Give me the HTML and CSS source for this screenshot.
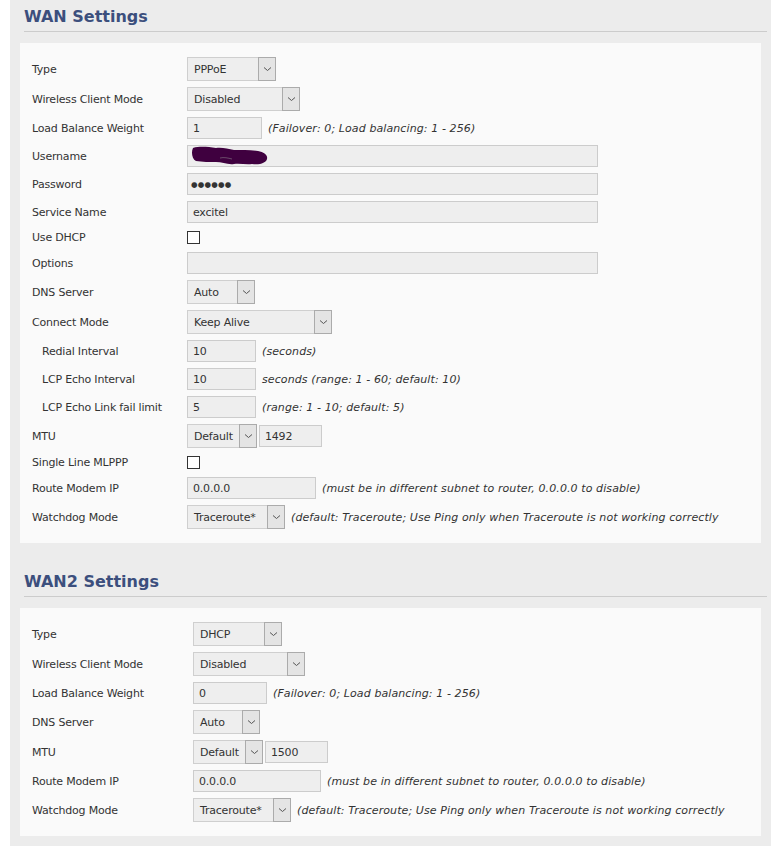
FILE: index.html
```html
<!DOCTYPE html>
<html>
<head>
<meta charset="utf-8">
<title>WAN Settings</title>
<link rel="stylesheet" href="styles.css">
</head>
<body>
<div class="panel">
  <h2 class="heading">WAN Settings</h2>
  <div class="card card-1">
    <div class="row"><span class="label">Type</span><span class="select w89"><span class="val">PPPoE</span><span class="arrow"><svg width="9" height="6" viewBox="0 0 9 6"><path d="M1 1.5 L4.5 4.5 L8 1.5" fill="none" stroke="#555" stroke-width="1"/></svg></span></span></div>
    <div class="row"><span class="label">Wireless Client Mode</span><span class="select w113"><span class="val">Disabled</span><span class="arrow"><svg width="9" height="6" viewBox="0 0 9 6"><path d="M1 1.5 L4.5 4.5 L8 1.5" fill="none" stroke="#555" stroke-width="1"/></svg></span></span></div>
    <div class="row"><span class="label">Load Balance Weight</span><span class="input w75">1</span><span class="help">(Failover: 0; Load balancing: 1 - 256)</span></div>
    <div class="row"><span class="label">Username</span><span class="input wide"><svg class="scribble" width="80" height="20" viewBox="0 0 80 20"><path d="M3 2 C10 0 18 1 26 2 C32 1 38 3 44 4 C52 4 60 4 68 5 C74 6 78 9 77 13 C76 17 70 19 62 18 C56 19 50 17 44 18 C38 19 32 16 26 16 C20 16 12 16 6 15 C2 13 1 6 3 2 Z" fill="#3f003f"/><path d="M30 12 C34 11 38 12 42 13" fill="none" stroke="#6a4a6a" stroke-width="1"/></svg></span></div>
    <div class="row"><span class="label">Password</span><span class="input wide dots">●●●●●●</span></div>
    <div class="row"><span class="label">Service Name</span><span class="input wide">excitel</span></div>
    <div class="row"><span class="label">Use DHCP</span><span class="check"></span></div>
    <div class="row"><span class="label">Options</span><span class="input wide"></span></div>
    <div class="row"><span class="label">DNS Server</span><span class="select w68"><span class="val">Auto</span><span class="arrow"><svg width="9" height="6" viewBox="0 0 9 6"><path d="M1 1.5 L4.5 4.5 L8 1.5" fill="none" stroke="#555" stroke-width="1"/></svg></span></span></div>
    <div class="row"><span class="label">Connect Mode</span><span class="select w145"><span class="val">Keep Alive</span><span class="arrow"><svg width="9" height="6" viewBox="0 0 9 6"><path d="M1 1.5 L4.5 4.5 L8 1.5" fill="none" stroke="#555" stroke-width="1"/></svg></span></span></div>
    <div class="row"><span class="label sub">Redial Interval</span><span class="input w69">10</span><span class="help">(seconds)</span></div>
    <div class="row"><span class="label sub">LCP Echo Interval</span><span class="input w69">10</span><span class="help">seconds (range: 1 - 60; default: 10)</span></div>
    <div class="row"><span class="label sub">LCP Echo Link fail limit</span><span class="input w69">5</span><span class="help">(range: 1 - 10; default: 5)</span></div>
    <div class="row"><span class="label">MTU</span><span class="select w70"><span class="val">Default</span><span class="arrow"><svg width="9" height="6" viewBox="0 0 9 6"><path d="M1 1.5 L4.5 4.5 L8 1.5" fill="none" stroke="#555" stroke-width="1"/></svg></span></span><span class="input w63 gap2">1492</span></div>
    <div class="row"><span class="label">Single Line MLPPP</span><span class="check"></span></div>
    <div class="row"><span class="label">Route Modem IP</span><span class="input w129">0.0.0.0</span><span class="help">(must be in different subnet to router, 0.0.0.0 to disable)</span></div>
    <div class="row"><span class="label">Watchdog Mode</span><span class="select w98"><span class="val">Traceroute*</span><span class="arrow"><svg width="9" height="6" viewBox="0 0 9 6"><path d="M1 1.5 L4.5 4.5 L8 1.5" fill="none" stroke="#555" stroke-width="1"/></svg></span></span><span class="help">(default: Traceroute; Use Ping only when Traceroute is not working correctly</span></div>
  </div>

  <h2 class="heading heading-2">WAN2 Settings</h2>
  <div class="card card-2">
    <div class="row"><span class="label">Type</span><span class="select w89"><span class="val">DHCP</span><span class="arrow"><svg width="9" height="6" viewBox="0 0 9 6"><path d="M1 1.5 L4.5 4.5 L8 1.5" fill="none" stroke="#555" stroke-width="1"/></svg></span></span></div>
    <div class="row"><span class="label">Wireless Client Mode</span><span class="select w112"><span class="val">Disabled</span><span class="arrow"><svg width="9" height="6" viewBox="0 0 9 6"><path d="M1 1.5 L4.5 4.5 L8 1.5" fill="none" stroke="#555" stroke-width="1"/></svg></span></span></div>
    <div class="row"><span class="label">Load Balance Weight</span><span class="input w74">0</span><span class="help">(Failover: 0; Load balancing: 1 - 256)</span></div>
    <div class="row"><span class="label">DNS Server</span><span class="select w67"><span class="val">Auto</span><span class="arrow"><svg width="9" height="6" viewBox="0 0 9 6"><path d="M1 1.5 L4.5 4.5 L8 1.5" fill="none" stroke="#555" stroke-width="1"/></svg></span></span></div>
    <div class="row"><span class="label">MTU</span><span class="select w70"><span class="val">Default</span><span class="arrow"><svg width="9" height="6" viewBox="0 0 9 6"><path d="M1 1.5 L4.5 4.5 L8 1.5" fill="none" stroke="#555" stroke-width="1"/></svg></span></span><span class="input w63 gap2">1500</span></div>
    <div class="row"><span class="label">Route Modem IP</span><span class="input w128">0.0.0.0</span><span class="help">(must be in different subnet to router, 0.0.0.0 to disable)</span></div>
    <div class="row"><span class="label">Watchdog Mode</span><span class="select w98"><span class="val">Traceroute*</span><span class="arrow"><svg width="9" height="6" viewBox="0 0 9 6"><path d="M1 1.5 L4.5 4.5 L8 1.5" fill="none" stroke="#555" stroke-width="1"/></svg></span></span><span class="help">(default: Traceroute; Use Ping only when Traceroute is not working correctly</span></div>
  </div>
</div>
</body>
</html>
```

FILE: styles.css
```css
html, body {
  margin: 0;
  padding: 0;
  background: #ffffff;
}
body {
  font-family: "DejaVu Sans", Verdana, sans-serif;
  font-size: 11px;
  letter-spacing: -0.2px;
  color: #333333;
}
.panel {
  margin-left: 10px;
  width: 761px;
  background: #ececec;
  padding-bottom: 10px;
  overflow: hidden;
}
.heading {
  margin: 0 4px 0 14px;
  padding: 7px 0 4px 0;
  font-size: 16px;
  line-height: 20px;
  font-weight: bold;
  letter-spacing: 0;
  color: #3c4f7d;
  border-bottom: 1px solid #cccccc;
}
.heading-2 {
  margin-top: 22px;
}
.card {
  margin: 11px 10px 0 10px;
  background: #fafafa;
  padding: 11px 12px;
}
.row {
  display: flex;
  align-items: center;
  padding: 3px 0;
}
.label {
  flex: none;
  line-height: 16px;
  padding-top: 1px;
  white-space: nowrap;
}
.card-1 .label { width: 155px; }
.card-2 .label { width: 161px; }
.label.sub { width: 145px; padding-left: 10px; }
.select {
  flex: none;
  box-sizing: border-box;
  height: 24px;
  display: flex;
  align-items: stretch;
  background: #eeeeee;
  border: 1px solid #cfcfcf;
}
.select .val {
  flex: 1;
  padding-left: 6px;
  padding-top: 1px;
  line-height: 21px;
  white-space: nowrap;
  overflow: hidden;
}
.select .arrow {
  flex: none;
  box-sizing: border-box;
  width: 18px;
  margin: -1px -1px -1px 0;
  border: 1px solid #ababab;
  background: #e4e4e4;
  display: flex;
  align-items: center;
  justify-content: center;
}
.input {
  flex: none;
  box-sizing: border-box;
  height: 22px;
  line-height: 19px;
  padding-top: 1px;
  padding-left: 5px;
  background: #eeeeee;
  border: 1px solid #cccccc;
  white-space: nowrap;
  overflow: hidden;
}
.input.dots {
  font-size: 7.5px;
  letter-spacing: 0.2px;
  padding-left: 3px;
  color: #333;
}
.scribble {
  display: block;
  margin: -1px 0 0 -3px;
}
.check {
  flex: none;
  box-sizing: border-box;
  width: 13px;
  height: 13px;
  margin: 2px 0;
  border: 1px solid #333333;
  background: #ffffff;
}
.help {
  margin-left: 6px;
  padding-top: 1px;
  font-style: italic;
  letter-spacing: 0.1px;
  line-height: 16px;
  white-space: nowrap;
}
.gap2 { margin-left: 2px; }
.w89 { width: 89px; }
.w113 { width: 113px; }
.w112 { width: 112px; }
.w68 { width: 68px; }
.w67 { width: 67px; }
.w145 { width: 145px; }
.w70 { width: 70px; }
.w98 { width: 98px; }
.w75 { width: 75px; }
.w74 { width: 74px; }
.w69 { width: 69px; }
.w63 { width: 63px; }
.w129 { width: 129px; }
.w128 { width: 128px; }
.wide { width: 411px; }
```
